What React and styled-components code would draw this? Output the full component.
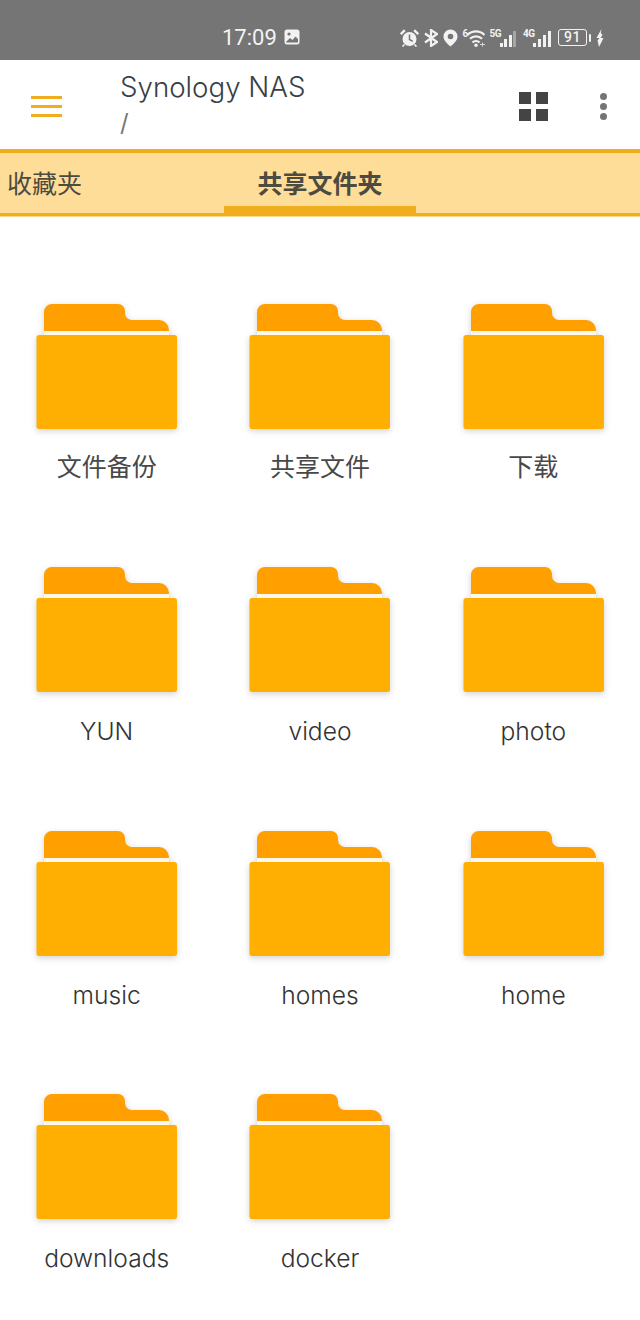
import React from 'react';
import styled, { createGlobalStyle } from 'styled-components';

const folders = [
  '文件备份', '共享文件', '下载',
  'YUN', 'video', 'photo',
  'music', 'homes', 'home',
  'downloads', 'docker',
];

const FONT = `Inter, "Noto Sans CJK SC", sans-serif`;

const GlobalStyle = createGlobalStyle`
  html, body {
    margin: 0;
    padding: 0;
    background: #fff;
  }
  * {
    box-sizing: border-box;
  }
`;

const App = () => (
  <Page>
    <GlobalStyle />
    <StatusBar>
      <Clock>17:09</Clock>
      <PictureIcon />
      <StatusIcons>
        <AlarmIcon />
        <BluetoothIcon />
        <PinIcon />
        <WifiIcon />
        <Signal label='5G' dim />
        <Signal label='4G' wide />
        <Battery>
          <BatteryBody>91</BatteryBody>
          <BatteryCap />
        </Battery>
        <BoltIcon />
      </StatusIcons>
    </StatusBar>

    <Header>
      <MenuButton>
        <MenuLine />
        <MenuLine />
        <MenuLine />
      </MenuButton>
      <TitleBlock>
        <Title>Synology NAS</Title>
        <Path>/</Path>
      </TitleBlock>
      <GridIcon>
        <GridSquare />
        <GridSquare />
        <GridSquare />
        <GridSquare />
      </GridIcon>
      <MoreButton>
        <Dot />
        <Dot />
        <Dot />
      </MoreButton>
    </Header>

    <Tabs>
      <Tab>收藏夹</Tab>
      <Tab $active>共享文件夹</Tab>
    </Tabs>

    <FolderGrid>
      {folders.map((name) => (
        <FolderCell key={name}>
          <FolderIcon />
          <FolderName $cjk={/[^\x00-\x7f]/.test(name)}>{name}</FolderName>
        </FolderCell>
      ))}
    </FolderGrid>
  </Page>
);

const FolderIcon = () => (
  <FolderSvg width='141' height='126' viewBox='0 0 141 126'>
    <path
      d='M8 27V8a8 8 0 0 1 8-8h66a7 7 0 0 1 7 7v2a7 7 0 0 0 7 7h27a10 10 0 0 1 10 10v1z'
      fill='#FF9F00'
    />
    <rect x='8' y='27' width='125' height='5' fill='#FFF8EA' />
    <rect x='0.5' y='31' width='140.5' height='94' rx='2.5' fill='#FFAE02' />
  </FolderSvg>
);

const PictureIcon = () => (
  <svg width='16' height='16' viewBox='0 0 16 16' style={{ marginLeft: 7, marginTop: -1 }}>
    <rect x='0.5' y='0.5' width='15' height='15' rx='2.5' fill='#f2f2f2' />
    <circle cx='5' cy='5' r='1.6' fill='#757575' />
    <path d='M2 13l4-4 2.5 2 3-3.5L14 10v3.5H2z' fill='#757575' />
  </svg>
);

const AlarmIcon = () => (
  <svg width='19' height='18' viewBox='0 0 19 18'>
    <circle cx='9.5' cy='10' r='7' fill='#f2f2f2' />
    <path d='M9.500 5.500v5l3.200 1.800' stroke='#757575' strokeWidth='1.500' fill='none' />
    <path d='M0.800 5.200l4-4M18.200 5.200l-4-4' stroke='#f2f2f2' strokeWidth='2.400' />
    <path d='M4.500 15.500l-2 2M14.500 15.500l2 2' stroke='#f2f2f2' strokeWidth='1.600' />
  </svg>
);

const BluetoothIcon = () => (
  <svg width='14' height='18' viewBox='0 0 14 18'>
    <path
      d='M1 4.500l12 8.500-6 4V1l6 4L1 13.500'
      stroke='#f2f2f2'
      strokeWidth='2.200'
      fill='none'
    />
  </svg>
);

const PinIcon = () => (
  <svg width='15' height='18' viewBox='0 0 15 18'>
    <path
      d='M7.500 0.500a7 7 0 0 1 7 7c0 4-4 7.500-7 10-3-2.500-7-6-7-10a7 7 0 0 1 7-7z'
      fill='#f2f2f2'
    />
    <circle cx='7.500' cy='7.500' r='2.800' fill='#757575' />
  </svg>
);

const WifiIcon = () => (
  <WifiWrap>
    <Tiny>6</Tiny>
    <svg width='18' height='18' viewBox='0 0 18 18'>
      <path
        d='M0.500 6a12 12 0 0 1 17 0M3 9.800a8.500 8.500 0 0 1 12 0M5.500 13.500a5 5 0 0 1 7 0'
        stroke='#f2f2f2'
        strokeWidth='2.200'
        fill='none'
      />
      <circle cx='9' cy='16.300' r='1.700' fill='#f2f2f2' />
      <path d='M13 15.500h5M15.500 13.500v4' stroke='#d8d8d8' strokeWidth='1' />
    </svg>
  </WifiWrap>
);

const Signal = ({ label, dim, wide }) => (
  <SignalWrap $wide={wide}>
    <SignalLabel>{label}</SignalLabel>
    <Bars $wide={wide}>
      {[4, 8, 12, 16].map((h, i) => (
        <Bar key={h} $h={h} $dim={dim && i === 3} />
      ))}
    </Bars>
  </SignalWrap>
);

const BoltIcon = () => (
  <svg width='8' height='18' viewBox='0 0 8 18'>
    <path d='M5.500 0L0.500 9h3L1.500 11.500 3 18 7.500 9H4.500L6.500 6 4.800 4z' fill='#f2f2f2' />
  </svg>
);

const Page = styled.div`
  width: 640px;
  height: 1320px;
  overflow: hidden;
  background: #fff;
  font-family: ${FONT};
`;

const StatusBar = styled.div`
  height: 60px;
  background: #757575;
  display: flex;
  align-items: center;
  padding: 15px 36px 0 222px;
  color: #f2f2f2;
`;

const Clock = styled.span`
  font-family: Roboto, sans-serif;
  font-size: 22px;
  line-height: 26px;
`;

const StatusIcons = styled.div`
  margin-left: auto;
  display: flex;
  align-items: center;
  gap: 5px;
`;

const WifiWrap = styled.div`
  display: flex;
  align-items: flex-start;
  height: 18px;
`;

const Tiny = styled.span`
  font-family: Roboto, sans-serif;
  font-size: 10px;
  line-height: 10px;
  font-weight: 700;
  width: 4px;
`;

const SignalWrap = styled.div`
  display: flex;
  align-items: flex-end;
  height: 18px;
  margin-left: ${(p) => (p.$wide ? 2 : 0)}px;
`;

const SignalLabel = styled.span`
  font-family: Roboto, sans-serif;
  font-size: 10px;
  line-height: 10px;
  font-weight: 700;
  align-self: flex-start;
  width: 10px;
  letter-spacing: -0.4px;
`;

const Bars = styled.div`
  display: flex;
  align-items: flex-end;
  gap: ${(p) => (p.$wide ? 2 : 1.5)}px;
`;

const Bar = styled.i`
  width: 3px;
  height: ${(p) => p.$h}px;
  background: ${(p) => (p.$dim ? '#a5a5a5' : '#f2f2f2')};
`;

const Battery = styled.div`
  display: flex;
  align-items: center;
  gap: 2px;
  margin-left: 2px;
`;

const BatteryBody = styled.div`
  width: 29px;
  height: 17px;
  border: 1.5px solid #f2f2f2;
  border-radius: 3px;
  font-family: Roboto, sans-serif;
  font-size: 14px;
  line-height: 14px;
  font-weight: 500;
  letter-spacing: 0.5px;
  text-align: center;
`;

const BatteryCap = styled.i`
  width: 2px;
  height: 8px;
  background: #f2f2f2;
  border-radius: 1px;
`;

const Header = styled.header`
  height: 89px;
  display: flex;
  align-items: center;
  background: #fff;
`;

const MenuButton = styled.div`
  width: 120px;
  padding-left: 31px;
  display: flex;
  flex-direction: column;
  gap: 6px;
  margin-top: 4px;
`;

const MenuLine = styled.i`
  width: 31px;
  height: 3px;
  background: #f0ae1f;
`;

const TitleBlock = styled.div`
  flex: 1;
  margin-top: 1px;
`;

const Title = styled.div`
  font-size: 27.7px;
  font-weight: 300;
  line-height: 36px;
  color: #3a3e44;
`;

const Path = styled.div`
  font-size: 24px;
  font-weight: 400;
  line-height: 36px;
  color: #777;
`;

const GridIcon = styled.div`
  display: grid;
  grid-template-columns: 12px 12px;
  grid-template-rows: 12px 12px;
  gap: 5px;
  margin-top: 4px;
`;

const GridSquare = styled.i`
  background: #444;
`;

const MoreButton = styled.div`
  width: 10px;
  margin: 4px 32px 0 50px;
  display: flex;
  flex-direction: column;
  gap: 3px;
  align-items: center;
`;

const Dot = styled.i`
  width: 7px;
  height: 7px;
  border-radius: 50%;
  background: #757575;
`;

const Tabs = styled.nav`
  height: 67px;
  display: grid;
  grid-template-columns: 224px 192px;
  background: #fddd98;
  border-top: 4px solid #f0ae1f;
  border-bottom: 3px solid #f0ae1f;
  box-shadow: 0 1px 0 #fdd98a;
`;

const Tab = styled.div`
  font-size: 25px;
  line-height: 56px;
  color: #4d4a40;
  padding: 3px 0 0 ${(p) => (p.$active ? 0 : 7)}px;
  font-weight: ${(p) => (p.$active ? 700 : 400)};
  text-align: ${(p) => (p.$active ? 'center' : 'left')};
  border-bottom: ${(p) => (p.$active ? '7px solid #f0ae1f' : 'none')};
  height: 60px;
`;

const FolderGrid = styled.main`
  display: grid;
  grid-template-columns: repeat(3, 1fr);
  grid-auto-rows: 263.33px;
  padding-top: 88px;
`;

const FolderCell = styled.div`
  display: flex;
  flex-direction: column;
  align-items: center;
`;

const FolderSvg = styled.svg`
  display: block;
  filter: drop-shadow(0 2px 3px rgba(0, 0, 0, 0.18));
`;

const FolderName = styled.div`
  margin-top: ${(p) => (p.$cjk ? 19 : 20)}px;
  font-size: ${(p) => (p.$cjk ? 25 : 24.6)}px;
  font-weight: ${(p) => (p.$cjk ? 400 : 300)};
  line-height: 36px;
  color: ${(p) => (p.$cjk ? '#484848' : '#333')};
`;

export default App;
